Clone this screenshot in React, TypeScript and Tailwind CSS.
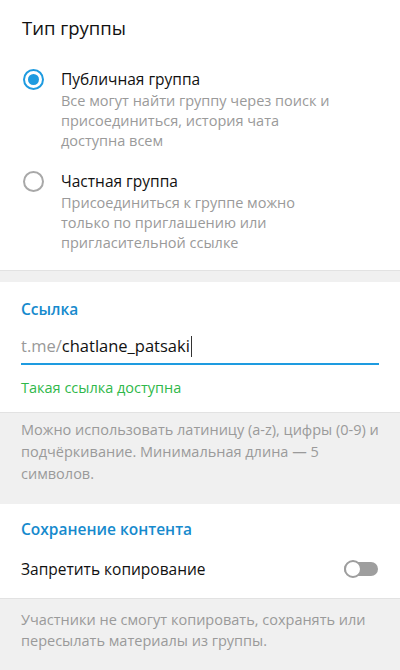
const font = { fontFamily: '"Open Sans", "Noto Sans", sans-serif' };

function Radio({ checked }: { checked: boolean }) {
  return checked ? (
    <span className="mt-[2px] flex h-[21px] w-[21px] shrink-0 items-center justify-center rounded-full border-[2.5px] border-[#1e9be0]">
      <span className="h-[11px] w-[11px] rounded-full bg-[#1e9be0]" />
    </span>
  ) : (
    <span className="mt-[2px] h-[21px] w-[21px] shrink-0 rounded-full border-[2px] border-[#a8a8a8]" />
  );
}

function Option({
  checked,
  title,
  lines,
}: {
  checked: boolean;
  title: string;
  lines: string[];
}) {
  return (
    <div className="flex gap-[17px] pl-[23px] pr-4">
      <Radio checked={checked} />
      <div>
        <p className="text-[15.5px] leading-[24px] text-[#111]">{title}</p>
        <p className="text-[14.5px] leading-[20px] text-[#9a9a9a]">
          {lines.map((l) => (
            <span key={l} className="block">
              {l}
            </span>
          ))}
        </p>
      </div>
    </div>
  );
}

export default function App() {
  return (
    <main className="min-h-[670px] w-[400px] bg-[#f0f0f0]" style={font}>
      {/* Group type */}
      <section className="bg-white pb-[17px] pt-[16px]">
        <h1 className="px-[22px] text-[18.5px] leading-[24px] text-[#111]">Тип группы</h1>
        <div className="mt-[27px] space-y-[18px]">
          <Option
            checked
            title="Публичная группа"
            lines={[
              'Все могут найти группу через поиск и',
              'присоединиться, история чата',
              'доступна всем',
            ]}
          />
          <Option
            checked={false}
            title="Частная группа"
            lines={[
              'Присоединиться к группе можно',
              'только по приглашению или',
              'пригласительной ссылке',
            ]}
          />
        </div>
      </section>

      <div className="h-[12px] border-t border-[#e2e2e2] bg-[#f0f0f0]" />

      {/* Link */}
      <section className="bg-white px-[21px] pb-[14px] pt-[16px]">
        <h2 className="text-[15.5px] font-semibold leading-[22px] text-[#168acd]">Ссылка</h2>
        <div className="mt-[14px] flex items-center border-b-2 border-[#1e9be0] pb-[5px] text-[16.5px] leading-[24px]">
          <span className="text-[#999]">t.me/</span>
          <span className="text-[#111]">chatlane_patsaki</span>
          <span className="ml-[1px] h-[21px] w-[1px] bg-[#333]" />
        </div>
        <p className="mt-[13px] text-[14.5px] leading-[20px] text-[#2fb84a]">Такая ссылка доступна</p>
      </section>

      <div className="border-t border-[#e2e2e2] px-[21px] pb-[19px] pt-[6px] text-[14.5px] leading-[22px] text-[#9a9a9a]">
        Можно использовать латиницу (a-z), цифры (0-9) и
        <br />
        подчёркивание. Минимальная длина — 5
        <br />
        символов.
      </div>

      {/* Content saving */}
      <section className="bg-white pt-[14px]">
        <h2 className="px-[21px] text-[15.5px] font-semibold leading-[22px] text-[#168acd]">
          Сохранение контента
        </h2>
        <div className="flex items-center justify-between pb-[18px] pl-[21px] pr-[22px] pt-[18px]">
          <span className="text-[15.5px] leading-[22px] text-[#111]">Запретить копирование</span>
          <span className="relative flex h-[18px] w-[34px] items-center">
            <span className="h-[14px] w-[34px] rounded-full bg-[#9e9e9e]" />
            <span className="absolute left-0 top-0 h-[18px] w-[18px] rounded-full border-[2px] border-[#9e9e9e] bg-white" />
          </span>
        </div>
      </section>

      <div className="border-t border-[#e2e2e2] px-[21px] pb-[18px] pt-[10px] text-[14.5px] leading-[21px] text-[#9a9a9a]">
        Участники не смогут копировать, сохранять или
        <br />
        пересылать материалы из группы.
      </div>
    </main>
  );
}
